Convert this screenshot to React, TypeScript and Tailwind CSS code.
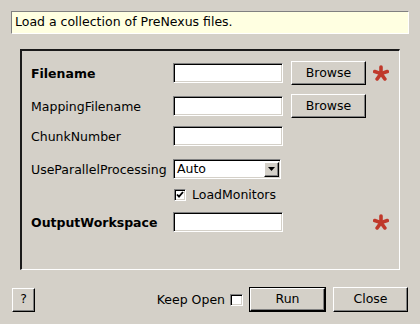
import React from 'react';

const font = { fontFamily: '"DejaVu Sans", "Liberation Sans", sans-serif' };

// sunken field (line edit, combo, checkbox)
const sunken =
  'bg-white border border-t-[#808080] border-l-[#808080] border-b-white border-r-white shadow-[inset_1px_1px_0_#000,inset_-1px_-1px_0_#d4d0c8]';
// raised push button
const raised =
  'bg-[#d4d0c8] border border-t-white border-l-white border-b-[#000] border-r-[#000] shadow-[inset_-1px_-1px_0_#808080]';

function Star() {
  return (
    <svg width="16" height="16" viewBox="0 0 16 16" className="ml-[7px]">
      <g stroke="#c0392b" strokeWidth="3.6" strokeLinecap="round">
        {[0, 72, 144, 216, 288].map((a) => (
          <line key={a} x1="8" y1="8.6" x2="8" y2="2" transform={`rotate(${a} 8 8.6)`} />
        ))}
      </g>
    </svg>
  );
}

function Field() {
  return <div className={`w-[110px] h-[20px] ${sunken}`} />;
}

function Browse() {
  return (
    <button className={`ml-[8px] w-[75px] h-[24px] text-[12.5px] text-black ${raised}`}>Browse</button>
  );
}

function Label({ children, bold }: { children: React.ReactNode; bold?: boolean }) {
  return (
    <div className={`w-[142px] pt-[3px] text-[12.5px] text-black ${bold ? 'font-bold' : ''}`}>{children}</div>
  );
}

export default function App() {
  return (
    <div className="w-[420px] h-[324px] bg-[#d4d0c8] flex flex-col overflow-hidden" style={font}>
      {/* tip */}
      <div className="mt-[11px] mx-[11px] h-[23px] bg-[#ffffe1] border border-t-[#808080] border-l-[#808080] border-b-white border-r-white flex items-center pl-[3px] text-[12.5px] text-black">
        Load a collection of PreNexus files.
      </div>

      {/* properties group */}
      <div className="mt-[15px] ml-[20px] w-[380px] h-[221px] border-2 border-t-[#1a1a1a] border-l-[#1a1a1a] border-b-white border-r-white border-b-[1px] border-r-[1px] pl-[9px] pt-[10px] flex flex-col">
        <div className="h-[24px] flex items-center">
          <Label bold>Filename</Label>
          <Field />
          <Browse />
          <Star />
        </div>
        <div className="mt-[9px] h-[24px] flex items-center">
          <Label>MappingFilename</Label>
          <Field />
          <Browse />
        </div>
        <div className="mt-[8px] h-[20px] flex items-center">
          <Label>ChunkNumber</Label>
          <Field />
        </div>
        <div className="mt-[13px] h-[20px] flex items-center">
          <Label>UseParallelProcessing</Label>
          <div className={`w-[108px] h-[20px] flex items-center ${sunken}`}>
            <span className="flex-1 pl-[3px] pt-[1px] text-[12.5px] text-black">Auto</span>
            <div className={`w-[15px] h-[15px] mr-[1px] flex items-center justify-center ${raised}`}>
              <svg width="7" height="4" viewBox="0 0 7 4">
                <path d="M0 0h7L3.5 4z" fill="#000" />
              </svg>
            </div>
          </div>
        </div>
        <div className="mt-[8px] h-[16px] flex items-center pl-[143px]">
          <div className={`w-[12px] h-[12px] flex items-center justify-center ${sunken}`}>
            <svg width="8" height="8" viewBox="0 0 8 8">
              <path d="M1 3.5l2 2.2L7 1" stroke="#000" strokeWidth="1.8" fill="none" />
            </svg>
          </div>
          <span className="ml-[6px] pt-[1px] text-[12.5px] text-black">LoadMonitors</span>
        </div>
        <div className="mt-[9px] h-[20px] flex items-center">
          <Label bold>OutputWorkspace</Label>
          <Field />
          <div className="w-[83px]" />
          <Star />
        </div>
      </div>

      {/* buttons */}
      <div className="mt-[17px] h-[25px] flex items-center px-[12px]">
        <button className={`w-[23px] h-[24px] text-[12.5px] text-black ${raised}`}>?</button>
        <div className="flex-1" />
        <span className="pt-[1px] text-[12.5px] text-black">Keep Open</span>
        <div className={`ml-[5px] w-[13px] h-[12px] ${sunken}`} />
        <button className="ml-[6px] w-[77px] h-[25px] border border-black">
          <div className={`w-full h-full flex items-center justify-center text-[12.5px] text-black ${raised}`}>Run</div>
        </button>
        <button className={`ml-[7px] w-[75px] h-[25px] text-[12.5px] text-black ${raised}`}>Close</button>
      </div>
    </div>
  );
}
